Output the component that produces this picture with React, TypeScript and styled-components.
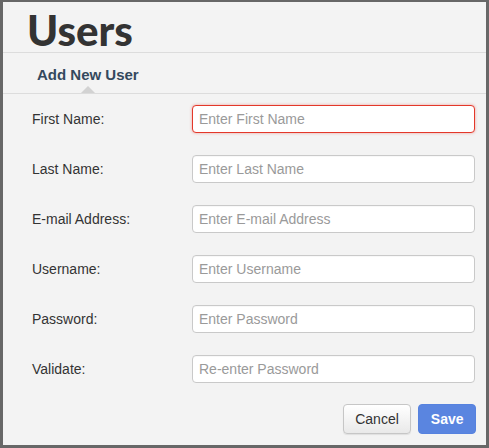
import React from "react";
import styled, { createGlobalStyle } from "styled-components";

const Global = createGlobalStyle`
  html, body { margin: 0; padding: 0; background: #666; }
  * { box-sizing: border-box; }
`;

const Frame = styled.div`
  width: 489px;
  height: 448px;
  padding: 2px 3px 3px 3px;
  background: #676767;
`;

const Panel = styled.div`
  height: 100%;
  background: #f3f3f3;
  display: flex;
  flex-direction: column;
  font-family: "Liberation Sans", Arial, sans-serif;
`;

const Header = styled.div`
  height: 51px;
  border-bottom: 1px solid #dcdcdc;
  padding-left: 24px;
  display: flex;
  align-items: flex-end;
`;

const Title = styled.h1`
  margin: 0 0 -1px 0;
  font-family: Lato, "Open Sans", sans-serif;
  font-weight: 900;
  font-size: 42px;
  line-height: 46px;
  color: #333;
  letter-spacing: 0;
`;

const TabBar = styled.div`
  height: 41px;
  border-bottom: 1px solid #dcdcdc;
  padding-left: 34px;
  display: flex;
  align-items: flex-end;
`;

const Tab = styled.div`
  position: relative;
  font-weight: bold;
  font-size: 15px;
  color: #34495e;
  padding-bottom: 10px;
  line-height: 17px;

  &::after {
    content: "";
    position: absolute;
    left: 50%;
    bottom: 0;
    margin-left: -7px;
    border-left: 7px solid transparent;
    border-right: 7px solid transparent;
    border-bottom: 7px solid #d2d2d2;
  }
`;

const Form = styled.form`
  display: grid;
  grid-template-columns: 160px 283px;
  row-gap: 22px;
  padding: 11px 0 0 29px;
  align-items: center;
`;

const Label = styled.label`
  font-size: 14px;
  color: #333;
`;

const Input = styled.input<{ $error?: boolean }>`
  height: 28px;
  width: 283px;
  border: 1px solid ${(p) => (p.$error ? "#e3382a" : "#c9c9c9")};
  border-radius: 4px;
  background: #fff;
  padding: 0 6px;
  font-family: "Liberation Sans", Arial, sans-serif;
  font-size: 14px;
  color: #333;
  outline: none;
  box-shadow: ${(p) => (p.$error ? "0 0 3px rgba(227, 56, 42, 0.45)" : "inset 0 1px 1px rgba(0,0,0,0.03)")};

  &::placeholder {
    color: #9a9a9a;
  }
`;

const Actions = styled.div`
  display: flex;
  justify-content: flex-end;
  gap: 7px;
  padding: 21px 10px 0 0;
`;

const Button = styled.button<{ $primary?: boolean }>`
  height: 30px;
  padding: 0 ${(p) => (p.$primary ? "11.5px" : "11.5px")};
  border-radius: 4px;
  font-family: "Liberation Sans", Arial, sans-serif;
  font-size: 14px;
  cursor: pointer;
  border: 1px solid ${(p) => (p.$primary ? "#5682df" : "#c6c6c6")};
  background: ${(p) =>
    p.$primary ? "#5a85e0" : "linear-gradient(#ffffff, #e9e9e9)"};
  color: ${(p) => (p.$primary ? "#fff" : "#333")};
  font-weight: ${(p) => (p.$primary ? "bold" : "normal")};
  box-shadow: ${(p) => (p.$primary ? "none" : "0 1px 1px rgba(0,0,0,0.08)")};
`;

const fields = [
  { label: "First Name:", placeholder: "Enter First Name", error: true },
  { label: "Last Name:", placeholder: "Enter Last Name" },
  { label: "E-mail Address:", placeholder: "Enter E-mail Address" },
  { label: "Username:", placeholder: "Enter Username" },
  { label: "Password:", placeholder: "Enter Password", type: "password" },
  { label: "Validate:", placeholder: "Re-enter Password", type: "password" },
];

export default function App() {
  return (
    <>
      <Global />
      <Frame>
        <Panel>
          <Header>
            <Title>Users</Title>
          </Header>
          <TabBar>
            <Tab>Add New User</Tab>
          </TabBar>
          <Form onSubmit={(e) => e.preventDefault()}>
            {fields.map((f) => (
              <React.Fragment key={f.label}>
                <Label>{f.label}</Label>
                <Input
                  $error={f.error}
                  type={f.type || "text"}
                  placeholder={f.placeholder}
                />
              </React.Fragment>
            ))}
          </Form>
          <Actions>
            <Button type="button">Cancel</Button>
            <Button type="button" $primary>
              Save
            </Button>
          </Actions>
        </Panel>
      </Frame>
    </>
  );
}
